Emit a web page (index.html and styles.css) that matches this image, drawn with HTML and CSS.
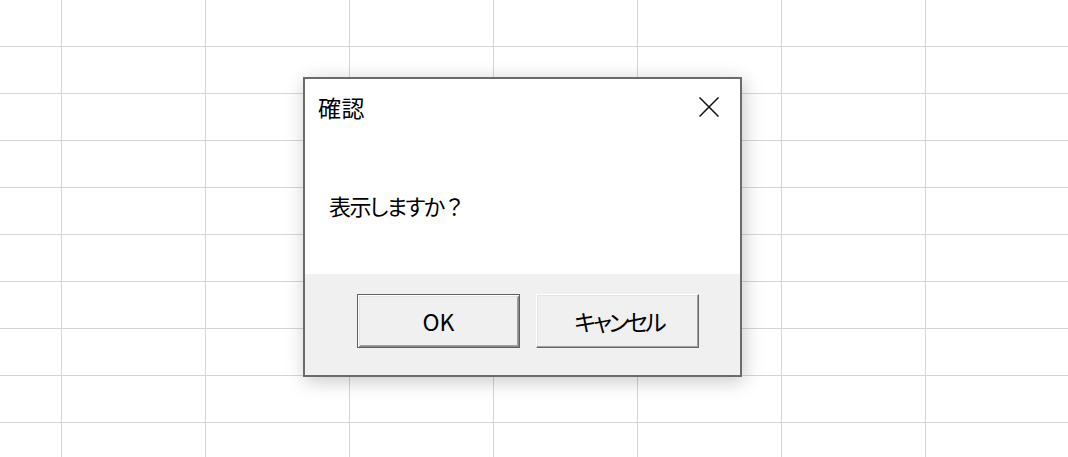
FILE: index.html
```html
<!DOCTYPE html>
<html lang="ja">
<head>
<meta charset="utf-8">
<title>確認</title>
<link rel="stylesheet" href="styles.css">
</head>
<body>
<div class="sheet">
  <div class="dialog" role="dialog" aria-labelledby="dlg-title">
    <div class="title-bar">
      <span class="title" id="dlg-title">確認</span>
      <span class="close" aria-label="閉じる">
        <svg width="20" height="20" viewBox="0 0 20 20"><path d="M0.5 0.5 L19.5 19.5 M19.5 0.5 L0.5 19.5" stroke="#111" stroke-width="1.5" fill="none"/></svg>
      </span>
    </div>
    <div class="body">
      <p class="message">表示しますか<span class="fullwidth">？</span></p>
    </div>
    <div class="footer">
      <button class="btn default">OK</button>
      <button class="btn"><span class="kana">キャンセル</span></button>
    </div>
  </div>
</div>
</body>
</html>
```
FILE: styles.css
```css
html, body {
  margin: 0;
  padding: 0;
}
body {
  width: 1068px;
  height: 457px;
  overflow: hidden;
  font-family: "Noto Sans CJK JP", "Noto Sans", sans-serif;
  font-feature-settings: "palt";
  color: #000;
}
.sheet {
  position: relative;
  width: 1068px;
  height: 457px;
  background-color: #fff;
  background-image:
    linear-gradient(to right, #d5d5d5 1px, transparent 1px),
    linear-gradient(to bottom, #d5d5d5 1px, transparent 1px);
  background-size: 144px 47px;
  background-position: 61px 46px;
}
.dialog {
  position: absolute;
  left: 303px;
  top: 77px;
  width: 439px;
  height: 300px;
  box-sizing: border-box;
  border: 2px solid #6b6b6b;
  background: #fff;
  box-shadow: 2px 4px 18px rgba(0, 0, 0, 0.22);
  display: flex;
  flex-direction: column;
}
.title-bar {
  height: 56px;
  display: flex;
  align-items: center;
  justify-content: space-between;
  padding: 0 21px 0 13px;
}
.title {
  font-size: 23px;
  line-height: 1;
  letter-spacing: 0.5px;
}
.close {
  display: flex;
  width: 20px;
  height: 20px;
}
.body {
  height: 139px;
  display: flex;
  align-items: center;
  padding-left: 24px;
}
.message {
  margin: 0;
  font-size: 22px;
  line-height: 1;
  letter-spacing: -1.6px;
}
.fullwidth {
  font-feature-settings: normal;
  letter-spacing: 0;
}
.footer {
  flex: 1;
  background: #f0f0f0;
  display: flex;
  justify-content: flex-end;
  align-items: flex-start;
  gap: 16px;
  padding: 20px 41px 0 0;
}
.btn {
  width: 163px;
  height: 54px;
  box-sizing: border-box;
  margin: 0;
  padding: 0;
  font-family: inherit;
  font-feature-settings: "palt";
  font-size: 23px;
  color: #000;
  background: #f0f0f0;
  border: 1px solid;
  border-color: #fff #696969 #696969 #fff;
  box-shadow: inset -1px -1px #a0a0a0, inset 1px 1px #e3e3e3;
}
.kana {
  letter-spacing: -3px;
  margin-right: -3px;
}
.btn.default {
  border: 1px solid #5f5f5f;
  box-shadow: inset 1px 1px #fff, inset -1px -1px #8a8a8a, inset 2px 2px #e3e3e3, inset -2px -2px #a0a0a0;
}
```
